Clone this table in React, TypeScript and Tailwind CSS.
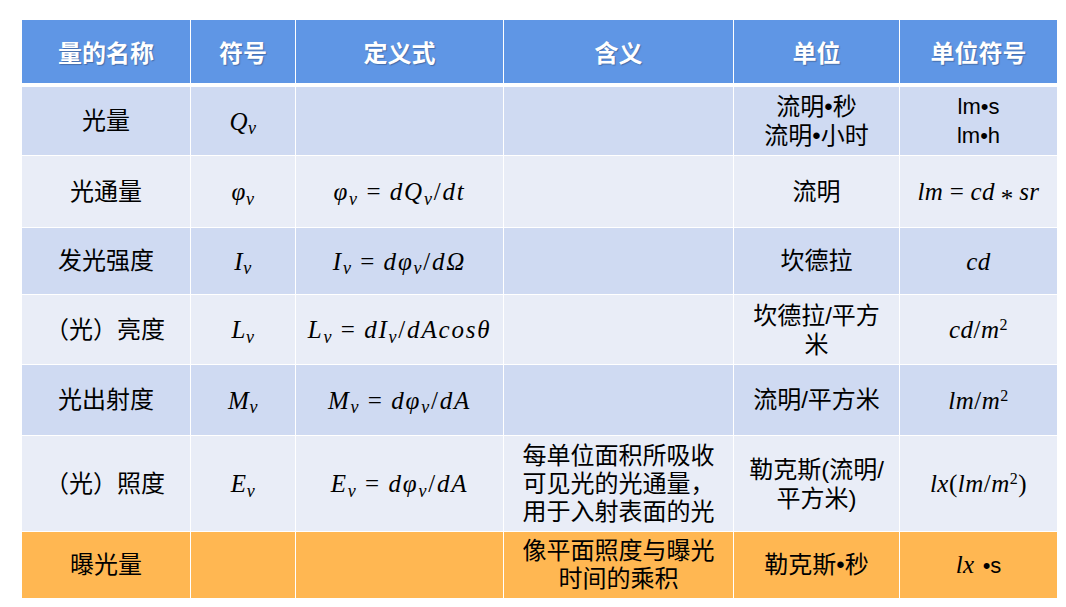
import React from "react";

const CJK = "font-['Liberation_Sans','Noto_Sans_CJK_SC',sans-serif]";

function M({ children, wide }: { children: React.ReactNode; wide?: boolean }) {
  return (
    <span
      className={`font-['Liberation_Serif',serif] italic text-[25px] leading-none whitespace-nowrap ${
        wide ? "tracking-[1.8px]" : "tracking-[0.5px]"
      }`}
    >
      {children}
    </span>
  );
}
function S({ children }: { children: React.ReactNode }) {
  return <sub className="text-[18px]">{children}</sub>;
}
function Op({ children, wide }: { children: React.ReactNode; wide?: boolean }) {
  return <span className={`not-italic ${wide ? "mx-[0.3em]" : "mx-[0.25em]"}`}>{children}</span>;
}
function Up({ children }: { children: React.ReactNode }) {
  return <span className="not-italic">{children}</span>;
}
function Sup2() {
  return <sup className="not-italic text-[16px]">2</sup>;
}

const cols = "grid grid-cols-[168px_104px_207px_229px_165px_157px] gap-x-px";

type Row = {
  h: string;
  bg: string;
  cells: React.ReactNode[];
};

const DARK = "bg-[#cfdaf2]";
const LIGHT = "bg-[#e9edf7]";
const ORANGE = "bg-[#ffb752]";

const rows: Row[] = [
  {
    h: "h-[68px]",
    bg: DARK,
    cells: [
      "光量",
      <M>Q<S>v</S></M>,
      null,
      null,
      <span className="leading-[29px]">流明•秒<br />流明•小时</span>,
      <span className="font-['Liberation_Sans',sans-serif] text-[22px] leading-[29px]">lm•s<br />lm•h</span>,
    ],
  },
  {
    h: "h-[71px]",
    bg: LIGHT,
    cells: [
      "光通量",
      <M>φ<S>v</S></M>,
      <M wide>φ<S>v</S><Op wide>=</Op>dQ<S>v</S><Up>/</Up>dt</M>,
      null,
      <span>流明</span>,
      <M>
        lm<Op>=</Op>cd
        <span className="not-italic mx-[0.22em] relative top-[0.28em]">*</span>
        sr
      </M>,
    ],
  },
  {
    h: "h-[66px]",
    bg: DARK,
    cells: [
      "发光强度",
      <M>I<S>v</S></M>,
      <M wide>I<S>v</S><Op wide>=</Op>dφ<S>v</S><Up>/</Up>dΩ</M>,
      null,
      <span>坎德拉</span>,
      <M>cd</M>,
    ],
  },
  {
    h: "h-[69px]",
    bg: LIGHT,
    cells: [
      <span className="-ml-[2px]">（光）亮度</span>,
      <M>L<S>v</S></M>,
      <M wide>L<S>v</S><Op wide>=</Op>dI<S>v</S><Up>/</Up>dAcosθ</M>,
      null,
      <span className="leading-[29px]">坎德拉/平方<br />米</span>,
      <M>cd<Up>/</Up>m<Sup2 /></M>,
    ],
  },
  {
    h: "h-[70px]",
    bg: DARK,
    cells: [
      "光出射度",
      <M>M<S>v</S></M>,
      <M wide>M<S>v</S><Op wide>=</Op>dφ<S>v</S><Up>/</Up>dA</M>,
      null,
      <span>流明/平方米</span>,
      <M>lm<Up>/</Up>m<Sup2 /></M>,
    ],
  },
  {
    h: "h-[95px]",
    bg: LIGHT,
    cells: [
      <span className="-ml-[2px]">（光）照度</span>,
      <M>E<S>v</S></M>,
      <M wide>E<S>v</S><Op wide>=</Op>dφ<S>v</S><Up>/</Up>dA</M>,
      <span className="leading-[28px]">每单位面积所吸收<br />可见光的光通量，<br />用于入射表面的光</span>,
      <span className="leading-[29px]">勒克斯(流明/<br />平方米)</span>,
      <M>lx<Up>(</Up>lm<Up>/</Up>m<Sup2 /><Up>)</Up></M>,
    ],
  },
  {
    h: "h-[66px]",
    bg: ORANGE,
    cells: [
      "曝光量",
      null,
      null,
      <span className="leading-[28px]">像平面照度与曝光<br />时间的乘积</span>,
      <span>勒克斯•秒</span>,
      <span>
        <M>lx</M>
        <span className="font-['Liberation_Sans',sans-serif] text-[22px] ml-[8px]">•s</span>
      </span>,
    ],
  },
];

export default function App() {
  const headers = ["量的名称", "符号", "定义式", "含义", "单位", "单位符号"];
  return (
    <div className={`w-[1066px] h-[607px] bg-white pt-[20px] pl-[22px] text-black ${CJK}`}>
      <div className="flex flex-col gap-y-px w-[1035px]">
        <div className={`${cols} h-[63px] mb-[3px]`}>
          {headers.map((h) => (
            <div
              key={h}
              className="bg-[#5f96e5] flex items-center justify-center pt-[4px] text-white font-bold text-[24px] [text-shadow:1px_1px_1px_rgba(40,60,100,0.45)]"
            >
              {h}
            </div>
          ))}
        </div>
        {rows.map((r, i) => (
          <div key={i} className={`${cols} ${r.h}`}>
            {r.cells.map((c, j) => (
              <div
                key={j}
                className={`${r.bg} flex items-center justify-center text-center text-[24px]`}
              >
                {c}
              </div>
            ))}
          </div>
        ))}
      </div>
    </div>
  );
}
